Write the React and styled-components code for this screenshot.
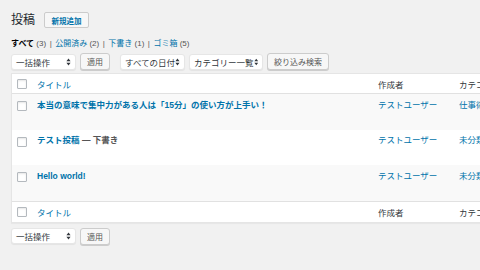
import React from 'react'
import styled, { createGlobalStyle } from 'styled-components'

const GlobalStyle = createGlobalStyle`
  html, body {
    margin: 0;
    padding: 0;
    background: #f1f1f1;
    width: 480px;
    height: 270px;
    overflow: hidden;
  }
  body {
    font-family: "Liberation Sans", "Noto Sans CJK JP", sans-serif;
    color: #23282d;
  }
`

const posts = [
  { title: '本当の意味で集中力がある人は「15分」の使い方が上手い！', author: 'テストユーザー', category: '仕事術' },
  { title: 'テスト投稿', state: '下書き', author: 'テストユーザー', category: '未分類' },
  { title: 'Hello world!', author: 'テストユーザー', category: '未分類' },
]

const Arrows = () => (
  <svg width="5" height="8" viewBox="0 0 5 8">
    <path d="M2.5 0.5 L4.6 3.2 L0.4 3.2 Z M2.5 7.5 L4.6 4.8 L0.4 4.8 Z" fill="#32373c" />
  </svg>
)

const Dropdown = ({ label, width }) => (
  <Select $width={width}>
    <span>{label}</span>
    <Arrows />
  </Select>
)

const Toolbar = ({ filters, top }) => (
  <Bar $top={top}>
    <Dropdown label="一括操作" width={65} />
    <Button>適用</Button>
    {filters && (
      <>
        <Spacer />
        <Dropdown label="すべての日付" width={65} />
        <Dropdown label="カテゴリー一覧" width={74} />
        <Button>絞り込み検索</Button>
      </>
    )}
  </Bar>
)

const TableHead = ({ foot }) => (
  <HeadRow $foot={foot}>
    <CheckCell $head><Check /></CheckCell>
    <HeadCell $link>タイトル</HeadCell>
    <HeadCell>作成者</HeadCell>
    <HeadCell>カテゴリー</HeadCell>
  </HeadRow>
)

const App = () => {
  return (
    <Page>
      <GlobalStyle />
      <Heading>
        <Title>投稿</Title>
        <AddNew>新規追加</AddNew>
      </Heading>

      <Views>
        <strong>すべて</strong> <Count>(3)</Count>
        <Sep>|</Sep>
        <a>公開済み</a> <Count>(2)</Count>
        <Sep>|</Sep>
        <a>下書き</a> <Count>(1)</Count>
        <Sep>|</Sep>
        <a>ゴミ箱</a> <Count>(5)</Count>
      </Views>

      <Toolbar filters top={3} />

      <Table>
        <TableHead />
        {posts.map((p, i) => (
          <Row key={i} $odd={i % 2 === 0}>
            <CheckCell><Check /></CheckCell>
            <PostTitle>
              <a>{p.title}</a>
              {p.state && <State> — {p.state}</State>}
            </PostTitle>
            <Cell><a>{p.author}</a></Cell>
            <Cell><a>{p.category}</a></Cell>
          </Row>
        ))}
        <TableHead foot />
      </Table>

      <Toolbar top={5} />
    </Page>
  )
}

export default App

const Page = styled.div`
  display: flex;
  flex-direction: column;
  align-items: flex-start;
  padding: 12px 0 0 11px;
  font-size: 8.5px;
`
const Heading = styled.div`
  display: flex;
  align-items: center;
  gap: 9px;
  height: 16px;
`
const Title = styled.h1`
  margin: 0;
  font-size: 12px;
  font-weight: 400;
  line-height: 16px;
  color: #23282d;
`
const AddNew = styled.span`
  display: inline-flex;
  align-items: center;
  height: 14px;
  padding: 0 6.5px;
  border: 1px solid #ccc;
  border-radius: 2px;
  background: #f7f7f7;
  color: #0073aa;
  font-size: 7.5px;
  font-weight: 700;
`
const Views = styled.div`
  margin-top: 10px;
  line-height: 12px;
  font-size: 8px;
  color: #555;
  white-space: nowrap;
  strong {
    color: #000;
    font-weight: 700;
  }
  a {
    color: #0073aa;
  }
`
const Count = styled.span`
  color: #555;
`
const Sep = styled.span`
  color: #555;
  margin: 0 3.5px;
`
const Bar = styled.div`
  display: flex;
  align-items: center;
  gap: 4px;
  margin-top: ${p => p.$top}px;
  height: 17px;
`
const Spacer = styled.div`
  width: 2px;
`
const Select = styled.div`
  box-sizing: border-box;
  width: ${p => p.$width}px;
  height: 16px;
  display: flex;
  align-items: center;
  justify-content: space-between;
  padding: 0 4px;
  background: #fff;
  border: 1px solid #e6e6e6;
  border-radius: 3px;
  box-shadow: 0 1px 1px rgba(0, 0, 0, 0.06);
  color: #32373c;
  font-size: 8.5px;
  white-space: nowrap;
`
const Button = styled.div`
  box-sizing: border-box;
  height: 17px;
  display: flex;
  align-items: center;
  padding: 0 6px;
  background: #f7f7f7;
  border: 1px solid #ccc;
  border-radius: 3px;
  box-shadow: 0 1px 0 #ccc;
  color: #555;
  font-size: 8px;
  white-space: nowrap;
`
const Table = styled.div`
  margin-top: 3px;
  width: 520px;
  background: #fff;
  border: 1px solid #e5e5e5;
  box-shadow: 0 1px 1px rgba(0, 0, 0, 0.04);
`
const grid = `
  display: grid;
  grid-template-columns: 25px 341px 81px 1fr;
`
const HeadRow = styled.div`
  ${grid}
  height: ${p => (p.$foot ? 20 : 19)}px;
  align-items: center;
  border-${p => (p.$foot ? 'top' : 'bottom')}: 1px solid #e1e1e1;
`
const HeadCell = styled.div`
  color: ${p => (p.$link ? '#0073aa' : '#32373c')};
  white-space: nowrap;
`
const Row = styled.div`
  ${grid}
  height: 35.5px;
  align-items: start;
  background: ${p => (p.$odd ? '#f9f9f9' : '#fff')};
`
const CheckCell = styled.div`
  padding-left: 5px;
  padding-top: ${p => (p.$head ? 0 : 7)}px;
  display: flex;
  align-items: center;
`
const Check = styled.span`
  box-sizing: border-box;
  width: 10px;
  height: 10px;
  border: 1px solid #b4b9be;
  border-radius: 1px;
  background: #fff;
  box-shadow: inset 0 1px 2px rgba(0, 0, 0, 0.1);
`
const Cell = styled.div`
  padding-top: 4.5px;
  line-height: 12px;
  white-space: nowrap;
  a {
    color: #0073aa;
  }
`
const PostTitle = styled(Cell)`
  font-weight: 700;
`
const State = styled.span`
  color: #555;
`
